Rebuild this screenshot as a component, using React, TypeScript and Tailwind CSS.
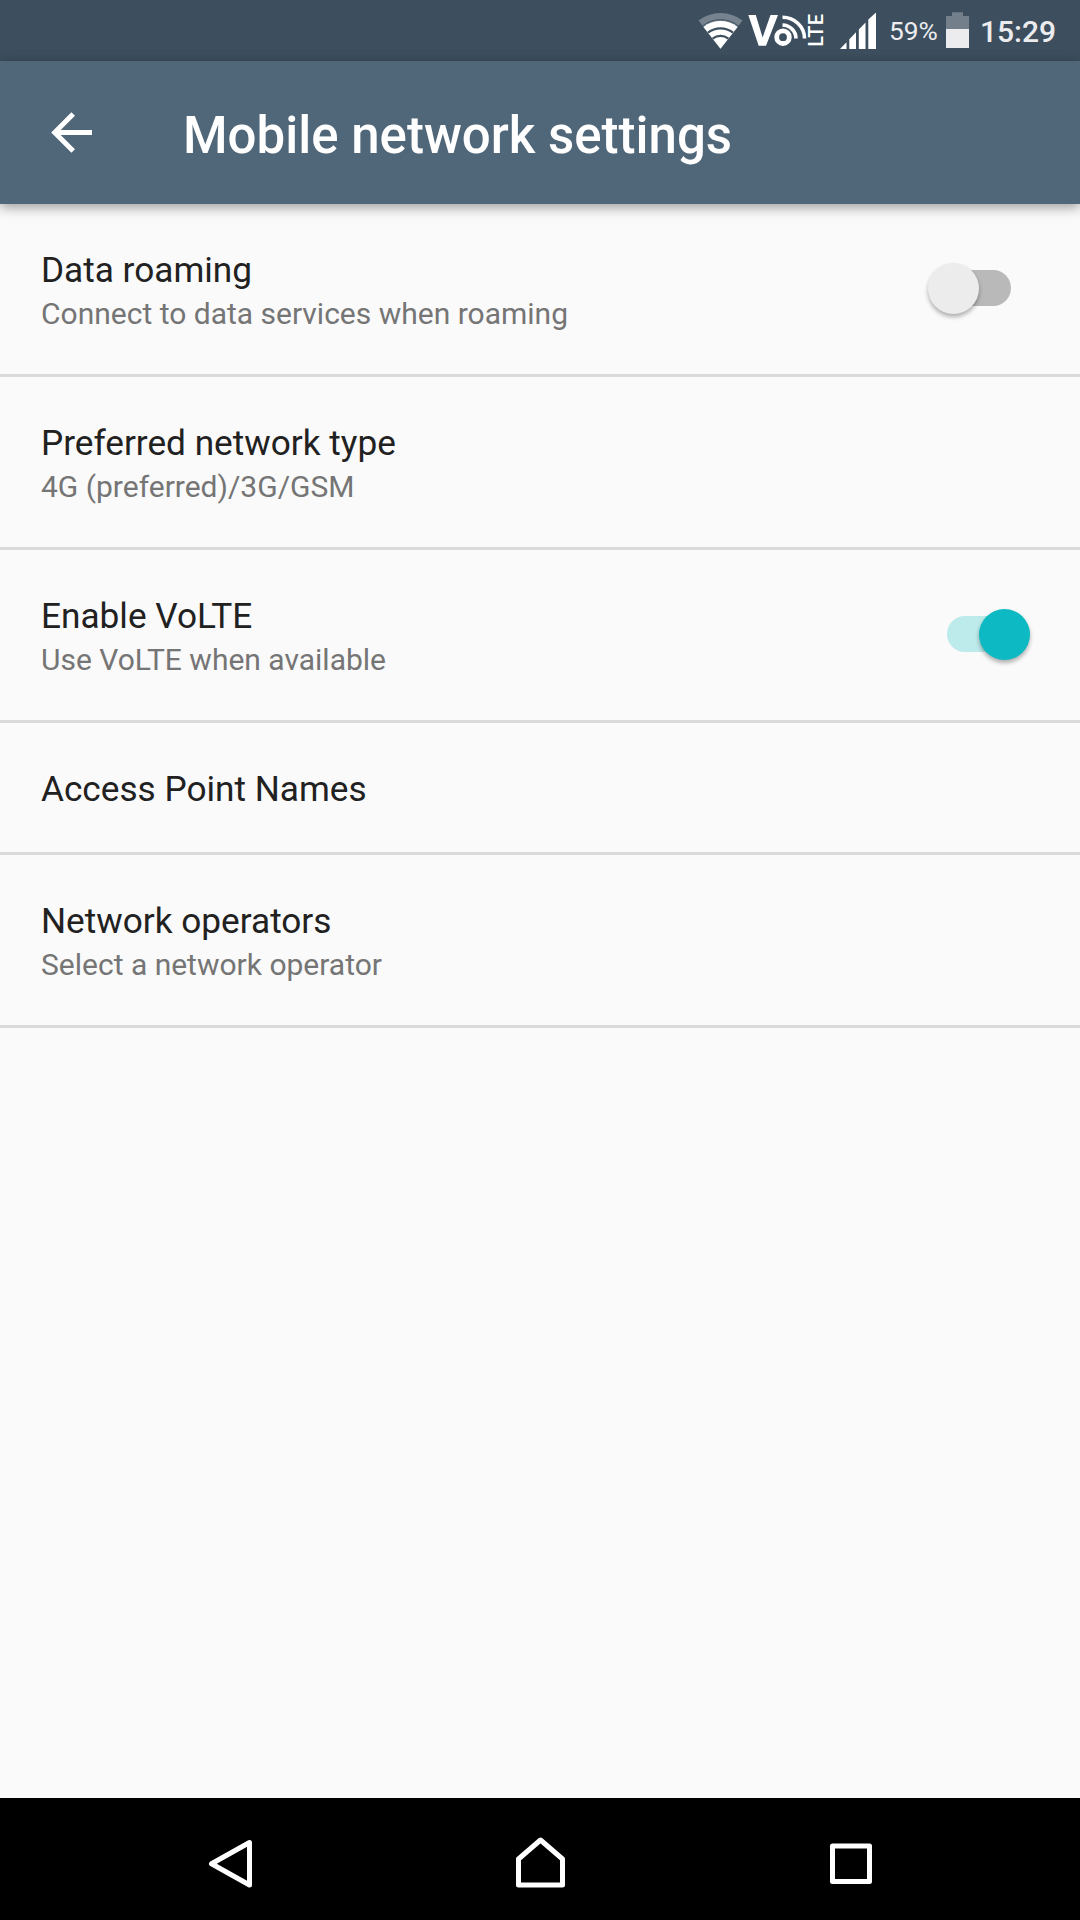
import { useState } from 'react';

interface Setting {
  id: string;
  title: string;
  summary?: string;
  toggle?: boolean;
}

const settings: Setting[] = [
  { id: 'roaming', title: 'Data roaming', summary: 'Connect to data services when roaming', toggle: true },
  { id: 'type', title: 'Preferred network type', summary: '4G (preferred)/3G/GSM' },
  { id: 'volte', title: 'Enable VoLTE', summary: 'Use VoLTE when available', toggle: true },
  { id: 'apn', title: 'Access Point Names' },
  { id: 'operators', title: 'Network operators', summary: 'Select a network operator' },
];

function WifiIcon() {
  return (
    <svg className="ml-[698px] h-[61px] w-[45px] shrink-0" viewBox="698 0 45 61" fill="#fff">
      <path d="M720.5 48.7L698.5 20.6A36 36 0 0 1 742.5 20.6Z" fill="#76838e" />
      <path d="M720.5 48.7L703.4 26.9A27.7 27.7 0 0 1 737.6 26.9Z" />
      <path d="M702.6 26.1A28.200 28.200 0 0 1 738.4 26.1" fill="none" stroke="#3d4f5e" strokeWidth="1" />
      <path d="M708 32.7A20.300 20.300 0 0 1 733 32.7M712.6 38.6A12.800 12.800 0 0 1 728.4 38.6" fill="none" stroke="#3d4f5e" strokeWidth="2.2" />
    </svg>
  );
}

function VolteIcon() {
  return (
    <div className="relative ml-[5px] h-[61px] w-[76px] shrink-0 text-white">
      <svg className="h-[61px] w-[76px]" viewBox="748 0 76 61" fill="none" stroke="#fff">
        <path d="M748.300 15H755.800L762.600 37.500L770.500 15H778L766 45.700H758.700Z" fill="#fff" stroke="none" />
        <circle cx="783" cy="37.200" r="6.300" strokeWidth="4.800" />
        <path d="M782.500 25A14 13.500 0 0 1 796 38.500M782.500 17.300A22 21.200 0 0 1 804.500 38.500" strokeWidth="3.600" />
      </svg>
      <span className="absolute left-[48px] top-[20px] flex h-[20px] w-[40px] -rotate-90 items-center justify-center font-['Roboto'] text-[20px] font-medium leading-none tracking-[0.5px]">LTE</span>
    </div>
  );
}

function SignalIcon() {
  return (
    <svg className="ml-[16px] h-[61px] w-[36px] shrink-0" viewBox="840 0 36 61" fill="#fff">
      <path d="M840 49L846.500 42.200V49ZM849.300 49V39.300L856 32.300V49ZM858.800 49V29.400L865.500 22.400V49ZM868.300 49V19.500L876 12.500V49Z" />
    </svg>
  );
}

function BatteryIcon() {
  return (
    <svg className="ml-[8px] h-[61px] w-[23px] shrink-0" viewBox="946 0 23 61">
      <path d="M946 29V16H952V12.300H963V16H969V29Z" fill="#73808b" />
      <path d="M946 29H969V48H946Z" fill="#ececee" />
    </svg>
  );
}

function Switch({ checked, onChange }: { checked: boolean; onChange: () => void }) {
  return (
    <button
      type="button"
      role="switch"
      aria-checked={checked}
      onClick={onChange}
      className="relative mt-[59px] mr-[50px] h-[51px] w-[102px] shrink-0"
    >
      <span className={`absolute left-[19px] top-[7px] h-9 w-16 rounded-full ${checked ? 'bg-[#bdeaea]' : 'bg-[#b9b9b9]'}`} />
      <span
        className={`absolute top-0 size-[51px] rounded-full shadow-[0_3px_4px_rgba(0,0,0,0.3)] ${
          checked ? 'left-[51px] bg-[#0db9c2]' : 'left-0 bg-[#ececec]'
        }`}
      />
    </button>
  );
}

export default function App() {
  const [enabled, setEnabled] = useState<Record<string, boolean>>({ roaming: false, volte: true });

  const toggle = (id: string) => setEnabled((prev) => ({ ...prev, [id]: !prev[id] }));

  return (
    <div className="flex h-[1920px] w-[1080px] flex-col overflow-hidden bg-[#fafafa] font-['Roboto',sans-serif]">
      <div className="flex h-[61px] shrink-0 items-center whitespace-nowrap bg-[#3d4f5e]">
        <WifiIcon />
        <VolteIcon />
        <SignalIcon />
        <span className="ml-[13px] w-[49px] pt-[2px] text-[26.3px] leading-[61px] text-[#ececee]">59%</span>
        <BatteryIcon />
        <span className="ml-[11px] pt-[2px] text-[30px] font-medium leading-[61px] text-[#ececee]">15:29</span>
      </div>

      <header className="z-10 flex h-[143px] shrink-0 items-center bg-[#506679] shadow-[0_3px_12px_rgba(0,0,0,0.4)]">
        <button type="button" aria-label="Back" className="ml-[51px]">
          <svg className="h-[41px] w-[41px]" viewBox="0 0 41 41" fill="none" stroke="#fff" strokeWidth="5">
            <path d="M41 20.500H4M22.200 2L3.700 20.500L22.200 39" />
          </svg>
        </button>
        <h1 className="ml-[91px] pt-[7px] text-[51px] font-medium text-white">Mobile network settings</h1>
      </header>

      <main className="flex-1">
        {settings.map((item) => (
          <div
            key={item.id}
            className={`flex justify-between border-b-[3px] border-[#dadada] ${item.summary ? 'h-[173px]' : 'h-[132px]'}`}
          >
            <div className="pl-[41px] pt-[45px]">
              <div className="text-[35.2px] leading-[43px] text-[#212121]">{item.title}</div>
              {item.summary && <div className="text-[30px] leading-[43px] text-[#757575]">{item.summary}</div>}
            </div>
            {item.toggle && <Switch checked={enabled[item.id]} onChange={() => toggle(item.id)} />}
          </div>
        ))}
      </main>

      <nav className="flex h-[122px] shrink-0 bg-black">
        <svg className="ml-[205px] h-[122px] w-[50px]" viewBox="205 1798 50 122" fill="none" stroke="#fff" strokeWidth="5" strokeLinejoin="round">
          <path d="M211.500 1863.700L249.500 1842.500V1885Z" />
        </svg>
        <svg className="ml-[257px] h-[122px] w-[56px]" viewBox="512 1798 56 122" fill="none" stroke="#fff" strokeWidth="5" strokeLinejoin="round">
          <path d="M518.500 1885V1859L540.500 1840L562.500 1859V1885Z" />
        </svg>
        <svg className="ml-[257px] h-[122px] w-[52px]" viewBox="825 1798 52 122" fill="none" stroke="#fff" strokeWidth="5" strokeLinejoin="round">
          <path d="M832.500 1846H869.500V1881.500H832.500Z" />
        </svg>
      </nav>
    </div>
  );
}
